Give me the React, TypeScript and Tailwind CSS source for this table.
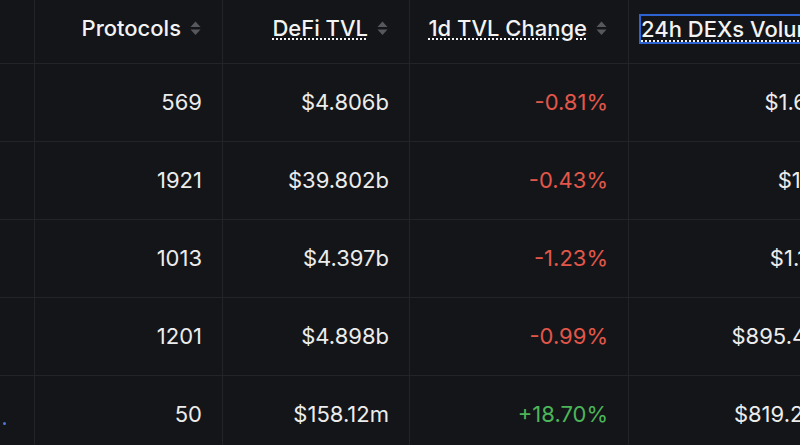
import React from "react";

const SortIcon = () => (
  <svg width="11" height="15" viewBox="0 0 11 15" className="shrink-0">
    <path d="M5.5 0.5 L10.5 6 L0.5 6 Z" fill="#56585d" />
    <path d="M0.5 8.5 L10.5 8.5 L5.5 14 Z" fill="#56585d" />
  </svg>
);

type Row = { p: string; tvl: string; ch: string; up: boolean; vol: string; dot?: boolean };

const rows: Row[] = [
  { p: "569", tvl: "$4.806b", ch: "-0.81%", up: false, vol: "$1.63b" },
  { p: "1921", tvl: "$39.802b", ch: "-0.43%", up: false, vol: "$1.2b" },
  { p: "1013", tvl: "$4.397b", ch: "-1.23%", up: false, vol: "$1.14b" },
  { p: "1201", tvl: "$4.898b", ch: "-0.99%", up: false, vol: "$895.41m" },
  { p: "50", tvl: "$158.12m", ch: "+18.70%", up: true, vol: "$819.27m", dot: true },
];

export default function App() {
  return (
    <div
      className="w-[800px] h-[445px] overflow-hidden bg-[#141518] text-[22px] text-[#ececec]"
      style={{ fontFamily: "Inter, 'Noto Sans', sans-serif" }}
    >
      <div className="flex flex-col w-[1100px]">
        <div className="flex h-[64px] border-b border-[#232428]">
          <div className="w-[35px] shrink-0 border-r border-[#232428]" />
          <div className="w-[188px] shrink-0 border-r border-[#232428] flex items-center justify-end gap-[9px] pr-[21px] pb-[7px] font-medium text-[#f3f3f3]">
            <span>Protocols</span>
            <SortIcon />
          </div>
          <div className="w-[187px] shrink-0 border-r border-[#232428] flex items-center justify-end gap-[9px] pr-[21px] pb-[7px] font-medium text-[#f3f3f3]">
            <span className="underline decoration-dotted decoration-[1.5px] underline-offset-[3px]">DeFi TVL</span>
            <SortIcon />
          </div>
          <div className="w-[219px] shrink-0 border-r border-[#232428] flex items-center justify-end gap-[9px] pr-[21px] pb-[7px] font-medium text-[#f3f3f3]">
            <span className="underline decoration-dotted decoration-[1.5px] underline-offset-[3px]">1d TVL Change</span>
            <SortIcon />
          </div>
          <div className="w-[226px] shrink-0 border-r border-[#232428] flex items-center pl-[10px] pb-[5px] font-medium text-[#f3f3f3]">
            <span className="border-2 border-[#2d63d3] leading-[26px] whitespace-nowrap">
              <span className="underline decoration-dotted decoration-[1.5px] underline-offset-[3px]">24h DEXs Volume</span>
            </span>
          </div>
        </div>
        {rows.map((r, i) => (
          <div key={i} className="flex h-[78px] border-b border-[#232428]">
            <div className="w-[35px] shrink-0 border-r border-[#232428] flex items-center pl-[3px] pt-[18px]">
              {r.dot && <span className="block w-[3px] h-[3px] rounded-full bg-[#4f74dc]" />}
            </div>
            <div className="w-[188px] shrink-0 border-r border-[#232428] flex items-center justify-end pr-[20px]">
              {r.p}
            </div>
            <div className="w-[187px] shrink-0 border-r border-[#232428] flex items-center justify-end pr-[20px]">
              {r.tvl}
            </div>
            <div
              className={
                "w-[219px] shrink-0 border-r border-[#232428] flex items-center justify-end pr-[20px] " +
                (r.up ? "text-[#4cb55a]" : "text-[#e2574a]")
              }
            >
              {r.ch}
            </div>
            <div className="w-[226px] shrink-0 border-r border-[#232428] flex items-center justify-end pr-[20px] whitespace-nowrap">
              {r.vol}
            </div>
          </div>
        ))}
      </div>
    </div>
  );
}
